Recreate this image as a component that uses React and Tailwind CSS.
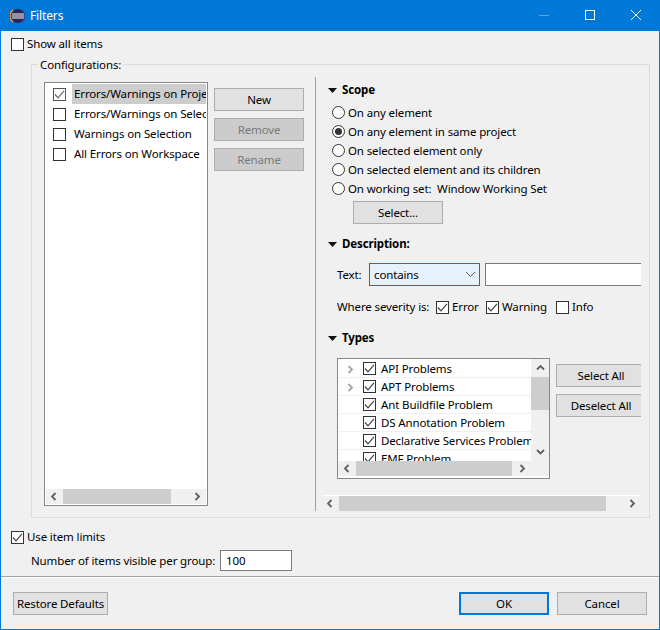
import React from "react";

function Check({ checked, muted }) {
  return (
    <span className={`w-[13px] h-[13px] shrink-0 border bg-white flex items-center justify-center ${muted ? "border-[#555]" : "border-[#333]"}`}>
      {checked && (
        <svg width="11" height="11" viewBox="0 0 11 11" fill="none">
          <path d="M1 5.5 L4 8.8 L10 1.8" stroke={muted ? "#666" : "#444"} strokeWidth="1.2" />
        </svg>
      )}
    </span>
  );
}

function Radio({ checked, label }) {
  return (
    <div className="h-[19px] flex items-center gap-[3px]">
      <span className="w-[13px] h-[13px] shrink-0 rounded-full border border-[#333] bg-white flex items-center justify-center">
        {checked && <span className="w-[7px] h-[7px] rounded-full bg-[#333]" />}
      </span>
      <span className="whitespace-pre">{label}</span>
    </div>
  );
}

function Btn({ children, disabled, primary, className = "" }) {
  return (
    <div
      className={`h-[23px] shrink-0 flex items-center justify-center ${
        primary ? "border-2 border-[#0078d7] bg-[#e1e1e1]" : "border border-[#adadad]"
      } ${disabled ? "bg-[#cccccc] text-[#7a7a7a]" : "bg-[#e1e1e1]"} ${className}`}
    >
      {children}
    </div>
  );
}

function Chev({ dir, color = "#606060" }) {
  const d = {
    left: "M5.5 1 L2 4.5 L5.5 8",
    right: "M2.5 1 L6 4.5 L2.5 8",
    up: "M1 5.5 L4.5 2 L8 5.5",
    down: "M1 3 L4.5 6.5 L8 3",
  }[dir];
  return (
    <svg width="9" height="9" viewBox="0 0 9 9" fill="none" className="shrink-0">
      <path d={d} stroke={color} strokeWidth="1.8" />
    </svg>
  );
}

// horizontal scrollbar: arrow cell, thumb, arrow pushed to the right end
function HBar({ thumb, arrow = 17 }) {
  return (
    <div className="h-[15px] flex-1 flex items-center bg-[#f0f0f0]">
      <div className="h-full flex items-center justify-center shrink-0" style={{ width: arrow }}>
        <Chev dir="left" />
      </div>
      <div className="h-full bg-[#cdcdcd] shrink-0" style={{ width: thumb }} />
      <div className="h-full flex items-center justify-end flex-1 pr-[4px]">
        <Chev dir="right" />
      </div>
    </div>
  );
}

function Section({ title, className = "" }) {
  return (
    <div className={`h-[16px] flex items-center ${className}`}>
      <svg width="9" height="5" viewBox="0 0 9 5" className="ml-[6px] shrink-0">
        <path d="M0 0 H9 L4.5 5 Z" fill="#111" />
      </svg>
      <span className="ml-[5px] font-bold">{title}</span>
    </div>
  );
}

const configs = [
  ["Errors/Warnings on Project", true],
  ["Errors/Warnings on Selection", false],
  ["Warnings on Selection", false],
  ["All Errors on Workspace", false],
];

const types = [
  ["API Problems", true],
  ["APT Problems", true],
  ["Ant Buildfile Problem", false],
  ["DS Annotation Problem", false],
  ["Declarative Services Problem", false],
  ["EMF Problem", false],
];

export default function App() {
  return (
    <div className="w-[660px] h-[630px] overflow-hidden flex flex-col border border-[#0078d7] border-t-0 bg-[#f0f0f0] text-[11.5px] leading-[16px] text-black tracking-[-0.13px] font-['Noto_Sans','Open_Sans',sans-serif]">
      {/* title bar */}
      <div className="h-[31px] shrink-0 -mx-px bg-[#0078d7] flex items-center text-white">
        <svg width="16" height="16" viewBox="0 0 16 16" className="ml-[10px] shrink-0">
          <circle cx="8" cy="8" r="7" fill="#2c2255" />
          <path d="M3 1.9 A7.6 7.6 0 0 0 3 14.1" stroke="#f7941e" strokeWidth="1.2" fill="none" />
          <path d="M2 6 H14 M1.6 8 H14.4 M2 10 H14" stroke="#fff" strokeWidth="1.1" />
        </svg>
        <span className="ml-[4px] text-[12px]">Filters</span>
        <svg width="120" height="31" viewBox="0 0 120 31" className="ml-auto mr-[6px] shrink-0" fill="none">
          <path d="M5 15.5 H15" stroke="#5aa6e6" />
          <rect x="51.5" y="10.5" width="9" height="9" stroke="#fff" />
          <path d="M97 10 L107 20 M107 10 L97 20" stroke="#fff" />
        </svg>
      </div>

      {/* show all */}
      <div className="mt-[6px] ml-[10px] h-[14px] flex items-center gap-[3px]">
        <Check />
        <span>Show all items</span>
      </div>

      {/* configurations group */}
      <div className="relative mt-[13px] ml-[30px] w-[619px] h-[454px] shrink-0 border border-[#dcdcdc] flex">
        <span className="absolute left-[6px] -top-[8px] px-[2px] bg-[#f0f0f0]">Configurations:</span>

        <div className="ml-[12px] mt-[17px] w-[164px] h-[424px] shrink-0 border border-[#828790] bg-white flex flex-col p-px">
          <div className="flex-1 overflow-hidden">
            {configs.map(([label, sel]) => (
              <div key={label} className="h-[20px] flex items-center pl-[7px]">
                <Check muted={sel} checked={sel} />
                <span className={`ml-[6px] pl-[2px] h-[20px] flex-1 flex items-center overflow-hidden whitespace-nowrap ${sel ? "bg-[#cdcdcd]" : ""}`}>
                  {label}
                </span>
              </div>
            ))}
          </div>
          <div className="flex shrink-0"><HBar thumb={108} /></div>
        </div>

        <div className="ml-[6px] mt-[23px] flex flex-col gap-[7px]">
          <Btn className="w-[90px]">New</Btn>
          <Btn className="w-[90px]" disabled>Remove</Btn>
          <Btn className="w-[90px]" disabled>Rename</Btn>
        </div>

        <div className="ml-[11px] mt-[12px] h-[434px] w-[7px] shrink-0 border-l border-[#a0a0a0]" />

        {/* right scrolled panel */}
        <div className="w-[319px] shrink-0 mt-[16px] h-[430px] flex flex-col">
          <div className="flex-1 overflow-hidden">
            <Section title="Scope" className="mt-px" />
            <div className="mt-[5px] ml-[10px] flex flex-col">
              <Radio label="On any element" />
              <Radio checked label="On any element in same project" />
              <Radio label="On selected element only" />
              <Radio label="On selected element and its children" />
              <Radio label="On working set:  Window Working Set" />
            </div>
            <Btn className="w-[90px] ml-[31px] mt-[3px]">Select...</Btn>

            <Section title="Description:" className="mt-[12px]" />
            <div className="mt-[11px] ml-[15px] flex items-center">
              <span className="w-[32px] shrink-0">Text:</span>
              <div className="w-[111px] h-[23px] shrink-0 border border-[#0078d7] bg-[#e5f1fb] flex items-center pl-[4px] pr-[3px] justify-between">
                <span>contains</span>
                <svg width="11" height="7" viewBox="0 0 11 7" fill="none">
                  <path d="M1 1 L5.5 5.5 L10 1" stroke="#555" />
                </svg>
              </div>
              <div className="ml-[5px] w-[170px] h-[23px] shrink-0 border border-[#7a7a7a] bg-white" />
            </div>
            <div className="mt-[13px] ml-[15px] h-[16px] flex items-center">
              <span className="w-[99px] shrink-0">Where severity is:</span>
              <span className="w-[50px] shrink-0 flex items-center gap-[3px]"><Check checked /><span>Error</span></span>
              <span className="w-[70px] shrink-0 flex items-center gap-[3px]"><Check checked /><span>Warning</span></span>
              <span className="flex items-center gap-[3px]"><Check /><span>Info</span></span>
            </div>

            <Section title="Types" className="mt-[15px]" />
            <div className="mt-[12px] ml-[15px] flex items-start">
              <div className="w-[213px] h-[121px] shrink-0 border border-[#828790] bg-white flex flex-col">
                <div className="h-[102px] flex shrink-0">
                  <div className="w-[193px] pt-px pl-px shrink-0 overflow-hidden">
                    {types.map(([label, exp]) => (
                      <div key={label} className="h-[18px] shrink-0 flex items-center border-b border-[#f0f0f0] whitespace-nowrap">
                        <span className="w-[24px] shrink-0 pl-[7px] pt-px flex items-center">
                          {exp && <Chev dir="right" color="#a6a6a6" />}
                        </span>
                        <Check checked />
                        <span className="ml-[5px]">{label}</span>
                      </div>
                    ))}
                  </div>
                  <div className="flex-1 flex flex-col bg-[#f0f0f0]">
                    <div className="h-[18px] flex items-center justify-center"><Chev dir="up" /></div>
                    <div className="h-[33px] bg-[#cdcdcd]" />
                    <div className="flex-1 flex items-end justify-center pb-[5px]"><Chev dir="down" /></div>
                  </div>
                </div>
                <div className="flex">
                  <div className="w-[193px] shrink-0 flex"><HBar thumb={156} arrow={18} /></div>
                  <div className="flex-1 h-[15px] bg-[#f0f0f0]" />
                </div>
              </div>
              <div className="ml-[6px] mt-[6px] flex flex-col gap-[7px]">
                <Btn className="w-[90px]">Select All</Btn>
                <Btn className="w-[90px]">Deselect All</Btn>
              </div>
            </div>
          </div>
          <div className="flex border-t border-white">
            <HBar thumb={267} />
          </div>
        </div>
      </div>

      {/* item limits */}
      <div className="mt-[12px] ml-[10px] h-[14px] flex items-center gap-[3px]">
        <Check checked />
        <span>Use item limits</span>
      </div>
      <div className="mt-[6px] ml-[30px] h-[21px] flex items-center">
        <span className="w-[189px] shrink-0 whitespace-nowrap">Number of items visible per group:</span>
        <div className="w-[72px] h-[21px] shrink-0 border border-[#7a7a7a] bg-white flex items-center pl-[5px]">100</div>
      </div>

      <div className="mt-[5px] border-t border-[#a0a0a0] border-b-white border-b h-[2px] shrink-0" />

      {/* footer */}
      <div className="mt-[14px] mx-[12px] flex items-center">
        <Btn className="w-[95px]">Restore Defaults</Btn>
        <Btn primary className="w-[90px] ml-auto">OK</Btn>
        <Btn className="w-[90px] ml-[8px]">Cancel</Btn>
      </div>
    </div>
  );
}
